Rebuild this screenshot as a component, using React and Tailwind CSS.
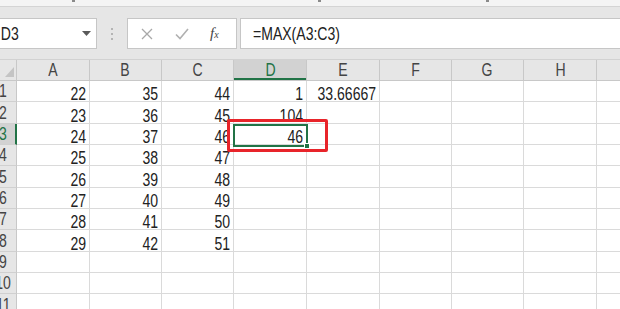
import React from 'react';

const cols = [
    { name: 'A', w: 'w-[73px]' },
    { name: 'B', w: 'w-[72px]' },
    { name: 'C', w: 'w-[72px]' },
    { name: 'D', w: 'w-[73px]' },
    { name: 'E', w: 'w-[73px]' },
    { name: 'F', w: 'w-[72px]' },
    { name: 'G', w: 'w-[72px]' },
    { name: 'H', w: 'w-[73px]' },
    { name: '', w: 'w-[73px]' },
];

// row heights alternate so the grid lines land where the screenshot has them
const rows = [
    { n: 1, tall: false, cells: ['22', '35', '44', '1', '33.66667'] },
    { n: 2, tall: true, cells: ['23', '36', '45', '104'] },
    { n: 3, tall: false, cells: ['24', '37', '46', '46'] },
    { n: 4, tall: false, cells: ['25', '38', '47'] },
    { n: 5, tall: true, cells: ['26', '39', '48'] },
    { n: 6, tall: false, cells: ['27', '40', '49'] },
    { n: 7, tall: false, cells: ['28', '41', '50'] },
    { n: 8, tall: true, cells: ['29', '42', '51'] },
    { n: 9, tall: false, cells: [] },
    { n: 10, tall: false, cells: [] },
    { n: 11, tall: true, cells: [] },
];

const font = { fontFamily: '"Liberation Sans", Arial, sans-serif' };

const App = () => {
    return (
        <div className="relative w-[620px] h-[309px] overflow-hidden bg-white" style={font}>
            {/* ribbon remains */}
            <div className="relative h-[7px] bg-[#f4f4f4] border-b border-[#d4d4d4]">
                <span className="absolute left-[72px] top-0 w-[3px] h-[2px] bg-[#8a8a8a]" />
                <span className="absolute left-[318px] top-0 w-[3px] h-[2px] bg-[#8a8a8a]" />
                <span className="absolute left-[486px] top-0 w-[3px] h-[2px] bg-[#8a8a8a]" />
            </div>

            {/* formula bar */}
            <div className="h-[53px] bg-[#e6e6e6] border-b border-[#d2d2d2] flex items-start pt-[11px]">
                <div className="w-[97px] h-[31px] bg-white border border-l-0 border-[#c6c6c6] flex items-center justify-between pr-[5px]">
                    <span className="inline-block origin-left scale-x-[0.78] text-[18px] text-[#222] pl-[1px] leading-none">D3</span>
                    <svg width="9" height="6" viewBox="0 0 9 6"><path d="M0 0h9L4.5 5z" fill="#5a5a5a" /></svg>
                </div>
                <div className="w-[30px] h-[31px] flex flex-col items-center justify-center gap-[3px]">
                    <span className="w-[2px] h-[2px] bg-[#b4b4b4]" />
                    <span className="w-[2px] h-[2px] bg-[#b4b4b4]" />
                    <span className="w-[2px] h-[2px] bg-[#b4b4b4]" />
                </div>
                <div className="w-[110px] h-[31px] bg-white border border-[#c6c6c6] flex items-center pl-[13px]">
                    <svg width="12" height="12" viewBox="0 0 12 12" className="shrink-0">
                        <path d="M1 1l10 10M11 1L1 11" stroke="#a8a8a8" strokeWidth="1.3" />
                    </svg>
                    <svg width="14" height="12" viewBox="0 0 14 12" className="ml-[22px] shrink-0">
                        <path d="M1 6.5l4 4L13 1" stroke="#b0b0b0" strokeWidth="1.6" fill="none" />
                    </svg>
                    <span className="ml-[21px] italic text-[#444] text-[15px] leading-none" style={{ fontFamily: '"Liberation Serif", serif' }}>
                        f<span className="text-[10px]">x</span>
                    </span>
                </div>
                <div className="ml-[3px] flex-1 h-[31px] bg-white border border-r-0 border-[#c6c6c6] flex items-center pl-[12px]">
                    <span className="inline-block origin-left scale-x-[0.78] text-[18px] text-[#222] leading-none">=MAX(A3:C3)</span>
                </div>
            </div>

            {/* column headers */}
            <div className="flex h-[21px] bg-[#e6e6e6] border-b border-[#c8c8c8]">
                <div className="w-[17px] shrink-0 border-r border-[#c8c8c8] relative">
                    <svg width="9" height="10" viewBox="0 0 9 10" className="absolute left-[5px] top-[7px]">
                        <path d="M9 0v10H0z" fill="#c4c4c4" />
                    </svg>
                </div>
                {cols.map((c, i) => (
                    <div
                        key={i}
                        className={`${c.w} shrink-0 border-r border-[#c8c8c8] flex items-center justify-center text-[18px] leading-none ${
                            c.name === 'D'
                                ? 'bg-[#d2d2d2] text-[#217346] shadow-[inset_0_-2px_0_#217346]'
                                : 'text-[#444]'
                        }`}
                    >
                        <span className="inline-block scale-x-[0.78]">{c.name}</span>
                    </div>
                ))}
            </div>

            {/* cells */}
            {rows.map((r) => (
                <div key={r.n} className={`flex ${r.tall ? 'h-[22px]' : 'h-[21px]'}`}>
                    <div
                        className={`w-[17px] shrink-0 overflow-hidden border-b border-[#d0d0d0] ${
                            r.n === 3
                                ? 'bg-[#d2d2d2] text-[#217346] border-r-2 border-r-[#217346]'
                                : 'bg-[#e6e6e6] text-[#444] border-r border-r-[#c8c8c8]'
                        }`}
                    >
                        <div className="w-[28px] -ml-[11px] h-full flex items-center justify-center text-[18px] leading-none">
                            <span className="inline-block scale-x-[0.78]">{r.n}</span>
                        </div>
                    </div>
                    {cols.map((c, i) => (
                        <div
                            key={i}
                            className={`${c.w} shrink-0 border-r border-b border-[#dadada] flex items-end justify-end pr-[3px] text-[18px] leading-[13px] text-[#222]`}
                        >
                            {r.cells[i] && (
                                <span className="inline-block origin-right scale-x-[0.78]">{r.cells[i]}</span>
                            )}
                        </div>
                    ))}
                </div>
            ))}

            {/* selected cell D3 */}
            <div className="absolute left-[233px] top-[124px] w-[75px] h-[23px] border-2 border-[#217346]" />
            <div className="absolute left-[304px] top-[143px] w-[6px] h-[6px] bg-[#217346] border border-white" />

            {/* red highlight box */}
            <div className="absolute left-[227px] top-[119px] w-[101px] h-[33px] border-[3px] border-[#e8242a] rounded-[2px]" />
        </div>
    );
};

export default App;
